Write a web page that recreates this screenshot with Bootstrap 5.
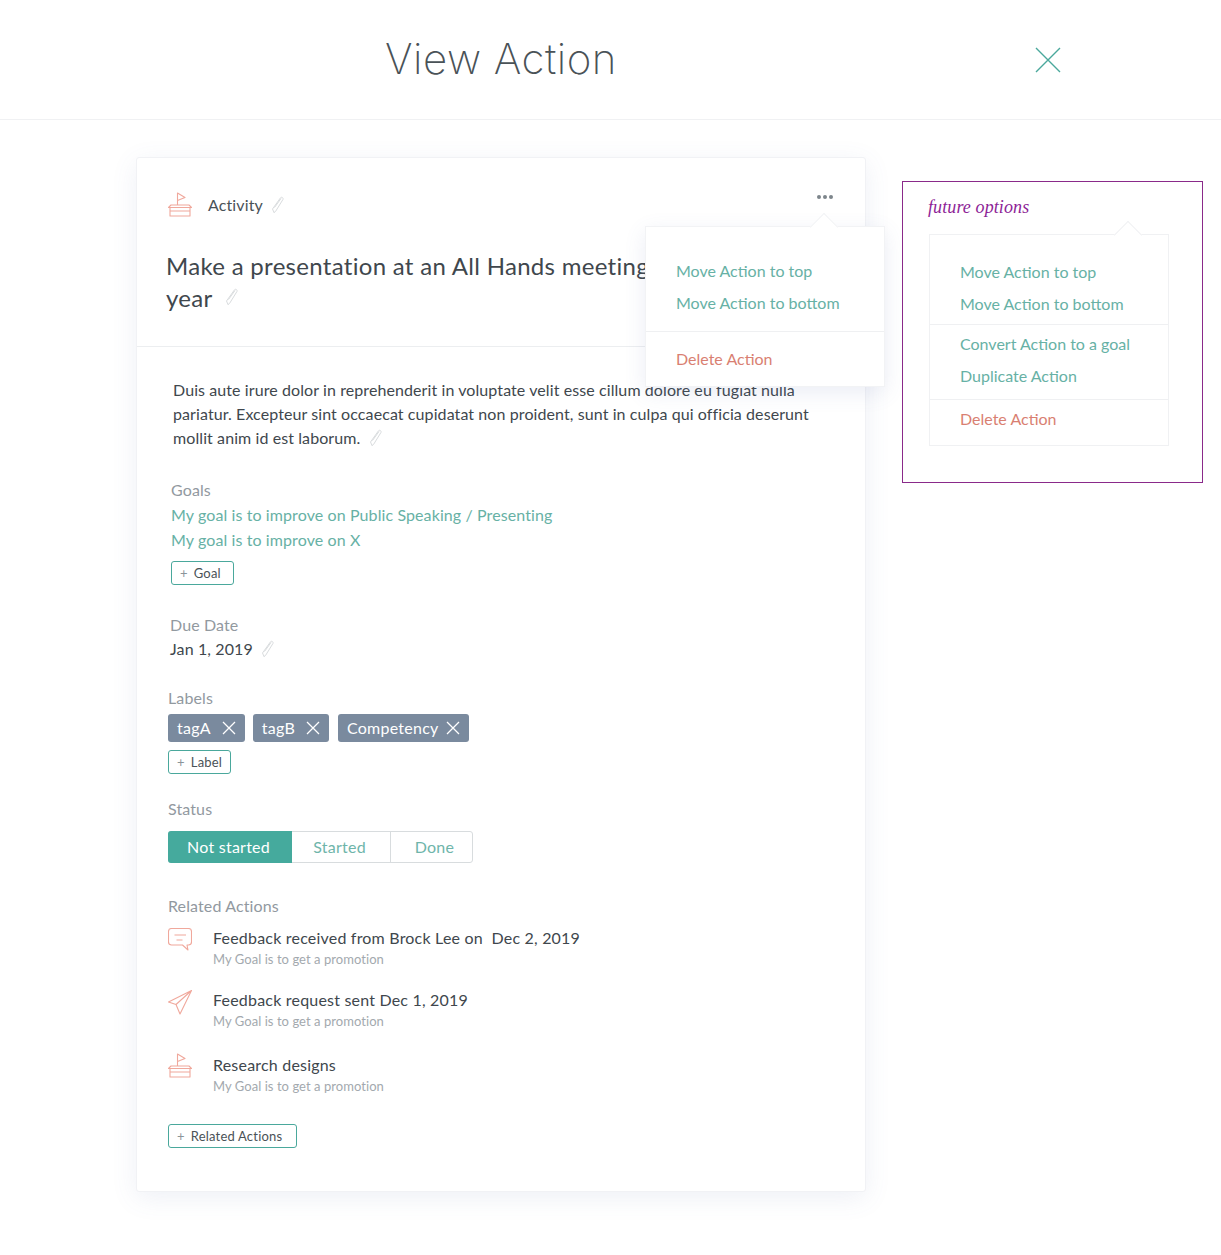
<!DOCTYPE html>
<html lang="en">
<head>
  <meta charset="UTF-8" />
  <meta name="viewport" content="width=device-width, initial-scale=1.0"/>
  <title>View Action</title>
  <link href="https://cdn.jsdelivr.net/npm/bootstrap@5.3.2/dist/css/bootstrap.min.css" rel="stylesheet" />
  <style>
    body {
      font-family: "Lato", "Noto Sans", sans-serif;
      font-size: 16px;
      letter-spacing: .12px;
      color: #3f474d;
      background: #fff;
      min-height: 1255px;
    }
    .top-bar {
      height: 120px;
      border-bottom: 1px solid #f0f1f3;
      padding-left: 136px;
    }
    .top-title {
      width: 730px;
      text-align: center;
      font-family: "Inter", sans-serif;
      font-weight: 250;
      font-size: 42px;
      letter-spacing: .5px;
      line-height: 114px;
      color: #4a5257;
      margin: 0 0 2px;
    }
    .top-close { margin-left: 168px; line-height: 0; }
    .page-body { padding-left: 136px; }
    .action-card {
      width: 730px;
      height: 1035px;
      margin-top: 37px;
      border: 1px solid #f1f2f5;
      border-radius: 3px;
      box-shadow: 0 6px 26px rgba(90, 110, 170, .10);
      background: #fff;
    }
    .card-head { height: 189px; border-bottom: 1px solid #eceef0; padding: 35px 29px 0 29px; }
    .kind-row { height: 24px; font-size: 16px; color: #4a5257; }
    .kind-row svg.boat { margin: 0 16px 0 2px; }
    .action-name { font-size: 24px; letter-spacing: .3px; line-height: 32px; font-weight: 400; color: #40474d; margin: 33px 0 0; white-space: nowrap; }
    .action-name svg { vertical-align: 1px; margin-left: 6px; }
    .more-dots { right: 31px; top: 36px; line-height: 0; }
    .pop-menu {
      right: -20px; top: 68px; width: 240px; height: 161px;
      background: #fff;
      border: 1px solid #f2f3f5;
      box-shadow: 0 6px 20px rgba(90, 110, 170, .12);
      z-index: 5;
    }
    .pop-arrow {
      position: absolute; width: 20px; height: 20px; top: -10px; right: 50px;
      background: #fff; border-left: 1px solid #f2f3f5; border-top: 1px solid #f2f3f5;
      transform: rotate(45deg);
    }
    .menu-link { display: block; color: #67b1a5; font-size: 16px; letter-spacing: 0; line-height: 32px; text-decoration: none; }
    .menu-del { color: #d97f72; }
    .menu-rule { border-top: 1px solid #eff0f2; }
    .pop-menu .menu-top { padding: 28px 0 12px 30px; position: relative; }
    .pop-menu .menu-bot { padding: 11px 0 0 30px; }
    .card-main { padding: 31px 31px 0 31px; }
    .desc-text { margin: 0 0 0 5px; line-height: 24px; font-size: 16px; letter-spacing: .09px; color: #40474d; }
    .desc-text svg { vertical-align: 3px; margin-top: -6px; margin-bottom: -6px; }
    .field-label { color: #92999f; font-size: 16px; line-height: 24px; }
    .goals-box { margin: 28px 0 0 3px; }
    .goal-link { display: block; color: #67b1a5; line-height: 25px; letter-spacing: .1px; text-decoration: none; }
    .add-goal { margin-top: 9px; }
    .due-box { margin: 28px 0 0 2px; }
    .due-val { line-height: 24px; color: #40474d; }
    .labels-box { margin-top: 25px; }
    .tag-chip {
      background: #7a8a9e; color: #fff; height: 28px; border-radius: 3px;
      padding: 0 9px 1px; font-size: 16px; letter-spacing: .25px; line-height: 27px;
      display: inline-flex; align-items: center; gap: 11px;
    }
    .tag-chip.tag-long { gap: 7px; margin-left: 1px; }
    .add-btn {
      display: inline-block; height: 24px; line-height: 22px; padding: 0 12px 0 8px;
      border: 1px solid #4aa89c; border-radius: 3px; font-size: 13px; letter-spacing: .2px; color: #4a5257;
      background: #fff;
    }
    .add-btn i { font-style: normal; color: #8b9499; margin-right: 6px; }
    .add-btn.add-label { padding-right: 8px; }
    .add-btn.add-related { padding-right: 14px; margin-top: 29px; }
    .status-box { margin-top: 23px; }
    .status-group { margin-top: 10px; height: 32px; width: 305px; border: 1px solid #d8dcde; border-radius: 3px; }
    .status-group span { display: block; text-align: center; line-height: 30px; color: #6fb5aa; font-size: 16px; letter-spacing: .25px; }
    .status-group .st-on { background: #45aa9d; color: #fff; width: 124px; margin: -1px 0 -1px -1px; padding-right: 3px; line-height: 32px; height: 32px; border-radius: 3px 0 0 3px; }
    .status-group .st-mid { width: 99px; border-right: 1px solid #d8dcde; padding-right: 3px; }
    .status-group .st-end { flex: 1; padding-left: 6px; }
    .related-box { margin-top: 31px; }
    .rel-item { margin-top: 8px; height: 42px; }
    .rel-item.rel-gap1 { margin-top: 20px; }
    .rel-item.rel-gap2 { margin-top: 23px; }
    .rel-item svg { margin: 2px 21px 0 0; flex: none; }
    .rel-item svg.boat { margin-top: 0; }
    .rel-title { line-height: 24px; letter-spacing: .2px; color: #40474d; }
    .rel-sub { line-height: 18px; font-size: 13px; letter-spacing: .05px; color: #a3a9ae; margin-top: 0; }
    .side-box {
      width: 301px; height: 302px; margin: 61px 0 0 36px;
      border: 1px solid #8a2a8a; padding: 13px 34px 0 26px; background: #fff;
    }
    .side-title { font-family: "Liberation Serif", serif; font-style: italic; font-size: 18px; letter-spacing: .1px; line-height: 24px; color: #8e1f97; margin-left: -1px; }
    .side-menu { margin-top: 15px; width: 240px; height: 212px; border: 1px solid #f0f1f3; background: #fff; }
    .side-menu .pop-arrow { top: -10px; right: 30px; border-color: #f0f1f3; }
    .side-menu .menu-link { padding-left: 30px; }
    .sm-a { padding: 21px 0 4px; position: relative; }
    .sm-b { padding: 3px 0 7px; }
    .sm-c { padding: 3px 0 0; }
    .pen { flex: none; }
  </style>
</head>
<body>
  <svg width="0" height="0" class="position-absolute">
    <symbol id="ic-pen" viewBox="0 0 14 18"><path d="M3 16.5 L1.5 13 L9.5 1.8 C10.5 .6 12.6 1.6 12 3.4 L4.5 15.5 Z M3 16.5 L2.8 17 M3.5 11.5 L10 2.5" fill="none" stroke="#d9dcde" stroke-width="1"/></symbol>
    <symbol id="ic-boat" viewBox="0 0 24 26"><path d="M9.5 13 V1 L17 5.5 L9.5 8.5 M3 13 H21 L23.5 15.5 H.5 Z M2 15.5 V24 H22 V15.5 M2 19 H22" fill="none" stroke="#f0a89c" stroke-width="1.1" stroke-linejoin="round"/></symbol>
  </svg>

  <div class="top-bar d-flex align-items-center">
    <h1 class="top-title">View Action</h1>
    <span class="top-close">
      <svg width="28" height="28" viewBox="0 0 28 28"><path d="M2 2 L26 26 M26 2 L2 26" stroke="#4aa89c" stroke-width="1.4" fill="none"/></svg>
    </span>
  </div>

  <div class="page-body d-flex align-items-start">
    <div class="action-card position-relative">
      <div class="card-head">
        <div class="kind-row d-flex align-items-center">
          <svg class="boat" width="24" height="26"><use href="#ic-boat"/></svg>
          <span>Activity</span>
          <svg class="pen ms-2" width="14" height="18"><use href="#ic-pen"/></svg>
        </div>
        <h2 class="action-name">Make a presentation at an All Hands meeting<br>year <svg class="pen" width="14" height="18"><use href="#ic-pen"/></svg></h2>
      </div>

      <span class="more-dots position-absolute">
        <svg width="18" height="6" viewBox="0 0 18 6"><circle cx="3" cy="3" r="2" fill="#7d858b"/><circle cx="9" cy="3" r="2" fill="#7d858b"/><circle cx="15" cy="3" r="2" fill="#7d858b"/></svg>
      </span>
      <div class="pop-menu position-absolute">
        <div class="menu-top">
          <span class="pop-arrow"></span>
          <a class="menu-link" href="#">Move Action to top</a>
          <a class="menu-link" href="#">Move Action to bottom</a>
        </div>
        <div class="menu-bot menu-rule">
          <a class="menu-link menu-del" href="#">Delete Action</a>
        </div>
      </div>

      <div class="card-main">
        <p class="desc-text">Duis aute irure dolor in reprehenderit in voluptate velit esse cillum dolore eu fugiat nulla pariatur. Excepteur sint occaecat cupidatat non proident, sunt in culpa qui officia deserunt mollit anim id est laborum. <svg class="pen ms-1" width="14" height="18"><use href="#ic-pen"/></svg></p>

        <div class="goals-box">
          <div class="field-label">Goals</div>
          <a class="goal-link" href="#">My goal is to improve on Public Speaking / Presenting</a>
          <a class="goal-link" href="#">My goal is to improve on X</a>
          <span class="add-btn add-goal"><i>+</i>Goal</span>
        </div>

        <div class="due-box">
          <div class="field-label">Due Date</div>
          <div class="due-val d-flex align-items-center gap-2">Jan 1, 2019 <svg class="pen" width="14" height="18"><use href="#ic-pen"/></svg></div>
        </div>

        <div class="labels-box">
          <div class="field-label">Labels</div>
          <div class="d-flex gap-2 mt-1">
            <span class="tag-chip">tagA <svg width="14" height="14" viewBox="0 0 14 14"><path d="M1 1 L13 13 M13 1 L1 13" stroke="#fff" stroke-width="1.3"/></svg></span>
            <span class="tag-chip">tagB <svg width="14" height="14" viewBox="0 0 14 14"><path d="M1 1 L13 13 M13 1 L1 13" stroke="#fff" stroke-width="1.3"/></svg></span>
            <span class="tag-chip tag-long">Competency <svg width="14" height="14" viewBox="0 0 14 14"><path d="M1 1 L13 13 M13 1 L1 13" stroke="#fff" stroke-width="1.3"/></svg></span>
          </div>
          <span class="add-btn add-label mt-2"><i>+</i>Label</span>
        </div>

        <div class="status-box">
          <div class="field-label">Status</div>
          <div class="status-group d-flex">
            <span class="st-on">Not started</span>
            <span class="st-mid">Started</span>
            <span class="st-end">Done</span>
          </div>
        </div>

        <div class="related-box">
          <div class="field-label">Related Actions</div>
          <div class="rel-item d-flex">
            <svg width="24" height="24" viewBox="0 0 24 24"><path d="M3.5 .5 H20.5 C22.5 .5 23.5 1.5 23.5 3.5 V14 C23.5 16 22.5 17 20.5 17 H19 L20 22 L14.5 17 H3.5 C1.5 17 .5 16 .5 14 V3.5 C.5 1.5 1.5 .5 3.5 .5 Z M6.5 7 H18 M8.5 12 H14.5" fill="none" stroke="#f0a89c" stroke-width="1.1" stroke-linejoin="round"/></svg>
            <div>
              <div class="rel-title">Feedback received from Brock Lee on&nbsp; Dec 2, 2019</div>
              <div class="rel-sub">My Goal is to get a promotion</div>
            </div>
          </div>
          <div class="rel-item d-flex rel-gap1">
            <svg width="24" height="25" viewBox="0 0 24 25"><path d="M23.5 .5 L.5 12 L8 14.5 L12 24 Z M23.5 .5 L8 14.5" fill="none" stroke="#f0a89c" stroke-width="1.1" stroke-linejoin="round"/></svg>
            <div>
              <div class="rel-title">Feedback request sent Dec 1, 2019</div>
              <div class="rel-sub">My Goal is to get a promotion</div>
            </div>
          </div>
          <div class="rel-item d-flex rel-gap2">
            <svg class="boat" width="24" height="26"><use href="#ic-boat"/></svg>
            <div>
              <div class="rel-title">Research designs</div>
              <div class="rel-sub">My Goal is to get a promotion</div>
            </div>
          </div>
          <span class="add-btn add-related"><i>+</i>Related Actions</span>
        </div>
      </div>
    </div>

    <div class="side-box">
      <div class="side-title">future options</div>
      <div class="side-menu">
        <div class="sm-a">
          <span class="pop-arrow"></span>
          <a class="menu-link" href="#">Move Action to top</a>
          <a class="menu-link" href="#">Move Action to bottom</a>
        </div>
        <div class="sm-b menu-rule">
          <a class="menu-link" href="#">Convert Action to a goal</a>
          <a class="menu-link" href="#">Duplicate Action</a>
        </div>
        <div class="sm-c menu-rule">
          <a class="menu-link menu-del" href="#">Delete Action</a>
        </div>
      </div>
    </div>
  </div>

  <script src="https://cdn.jsdelivr.net/npm/bootstrap@5.3.2/dist/js/bootstrap.bundle.min.js"></script>
</body>
</html>
